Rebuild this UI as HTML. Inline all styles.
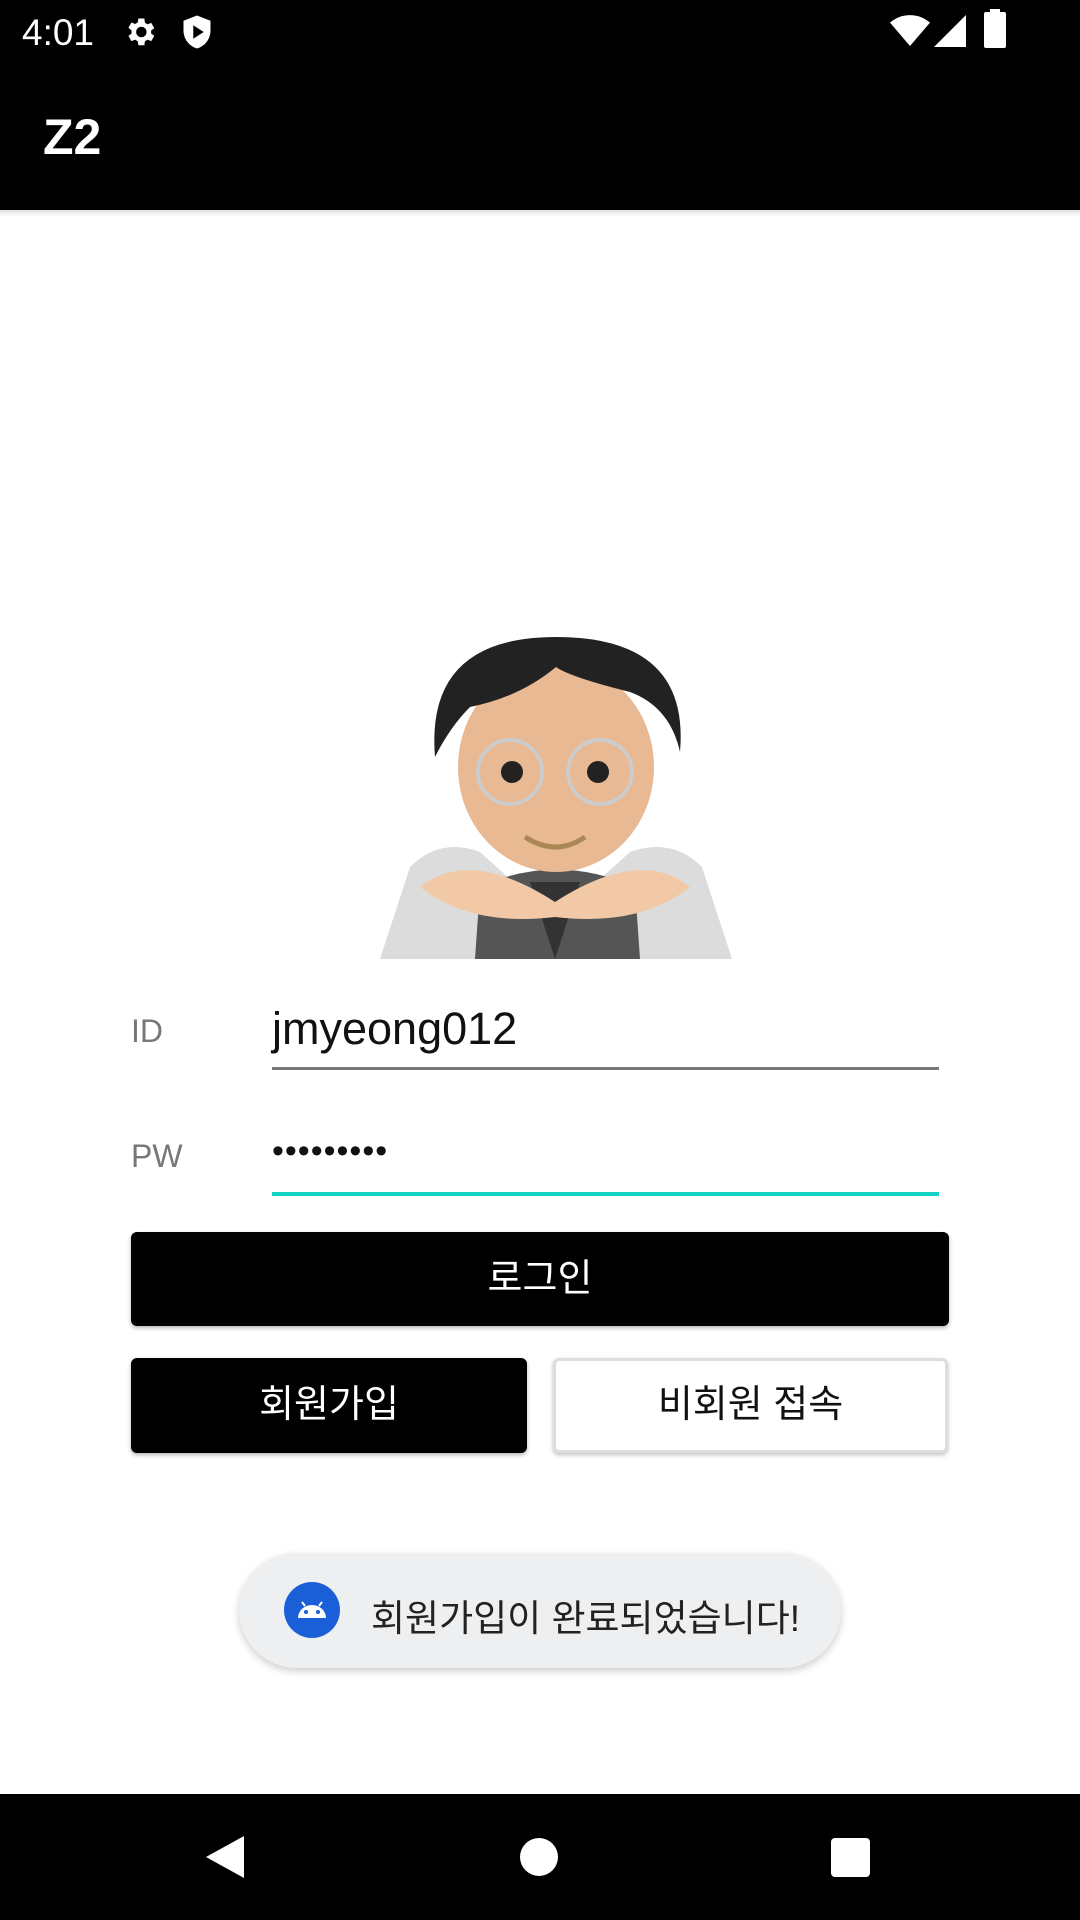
<!DOCTYPE html>
<html><head><meta charset="utf-8"><style>
*{margin:0;padding:0;box-sizing:border-box}
body{width:1080px;height:1920px;background:#fff;position:relative;overflow:hidden;font-family:"Liberation Sans","Noto Sans CJK KR",sans-serif}
.abs{position:absolute}
</style></head><body>
<div class="abs" style="left:0;top:0;width:1080px;height:210px;background:#000"></div>
<div class="abs" style="left:0;top:210px;width:1080px;height:6px;background:linear-gradient(#ddd,#fff)"></div>
<div class="abs" style="left:22px;top:12px;color:#fff;font-size:37px">4:01</div>
<svg class="abs" style="left:122px;top:14px" width="36" height="36" viewBox="0 0 24 24"><path fill="#fff" d="M19.4 13a7.5 7.5 0 0 0 0-2l2.1-1.6-2-3.5-2.5 1a7 7 0 0 0-1.700-1L14.9 3h-4l-.4 2.7a7 7 0 0 0-1.7 1l-2.5-1-2 3.5L6.4 11a7.5 7.5 0 0 0 0 2l-2.1 1.6 2 3.5 2.5-1a7 7 0 0 0 1.7 1l.4 2.7h4l.4-2.7a7 7 0 0 0 1.7-1l2.5 1 2-3.5zM12.9 15.5a3.5 3.5 0 1 1 0-7 3.5 3.5 0 0 1 0 7z"/></svg>
<svg class="abs" style="left:181px;top:14px" width="32" height="36" viewBox="0 0 20 24"><path fill="#fff" d="M10 1L1 4.5v6.5c0 6 4 10.5 9 12 5-1.5 9-6 9-12V4.5z"/><path fill="#000" d="M7.5 7.5v9l7-4.5z"/></svg>
<svg class="abs" style="left:890px;top:14px" width="40" height="34" viewBox="0 0 24 20"><path fill="#fff" d="M12 19L0 5c7-6 17-6 24 0z"/></svg>
<svg class="abs" style="left:934px;top:14px" width="32" height="34" viewBox="0 0 20 20"><path fill="#fff" d="M20 0v20H0z"/></svg>
<div class="abs" style="left:984px;top:12px;width:22px;height:36px;background:#fff;border-radius:2px"></div>
<div class="abs" style="left:990px;top:9px;width:10px;height:5px;background:#fff"></div>
<div class="abs" style="left:43px;top:108px;color:#fff;font-size:50px;font-weight:bold">Z2</div>

<svg class="abs" style="left:380px;top:637px" width="352" height="322" viewBox="0 0 352 322">
<path d="M0 322 L30 230 Q60 200 100 215 L150 260 L200 260 L250 215 Q292 200 322 230 L352 322Z" fill="#dcdcdc"/>
<path d="M95 322 L100 250 Q175 215 255 250 L260 322Z" fill="#555"/>
<path d="M150 245 L175 322 L200 245Z" fill="#333"/>
<ellipse cx="176" cy="130" rx="98" ry="105" fill="#e8b993"/>
<path d="M55 120 Q45 0 176 0 Q310 0 300 115 Q290 70 250 55 Q190 40 176 30 Q140 60 90 70 Q70 90 55 120Z" fill="#222"/>
<circle cx="130" cy="135" r="32" fill="none" stroke="#ccc" stroke-width="4"/>
<circle cx="220" cy="135" r="32" fill="none" stroke="#ccc" stroke-width="4"/>
<circle cx="132" cy="135" r="11" fill="#222"/><circle cx="218" cy="135" r="11" fill="#222"/>
<path d="M145 200 Q176 220 205 200" stroke="#a85" stroke-width="5" fill="none"/>
<path d="M40 250 Q90 210 175 265 Q260 210 310 250 Q260 290 175 280 Q90 290 40 250Z" fill="#f2c9a6"/>
</svg>

<div class="abs" style="left:131px;top:1013px;color:#777;font-size:32px">ID</div>
<div class="abs" style="left:272px;top:1003px;color:#111;font-size:45px">jmyeong012</div>
<div class="abs" style="left:272px;top:1067px;width:667px;height:3px;background:#777"></div>
<div class="abs" style="left:131px;top:1138px;color:#777;font-size:32px">PW</div>
<div class="abs" style="left:272px;top:1132px;color:#111;font-size:34px;letter-spacing:1px">•••••••••</div>
<div class="abs" style="left:272px;top:1192px;width:667px;height:4px;background:#13d1c3"></div>

<div class="abs" style="left:131px;top:1232px;width:818px;height:94px;background:#000;border-radius:6px;color:#fff;font-size:38px;text-align:center;line-height:94px;box-shadow:0 2px 4px rgba(0,0,0,.3)">로그인</div>
<div class="abs" style="left:131px;top:1358px;width:396px;height:95px;background:#000;border-radius:6px;color:#fff;font-size:38px;text-align:center;line-height:95px;box-shadow:0 2px 4px rgba(0,0,0,.3)">회원가입</div>
<div class="abs" style="left:553px;top:1358px;width:395px;height:95px;background:#fff;border:3px solid #ddd;border-radius:6px;color:#111;font-size:38px;text-align:center;line-height:89px;box-shadow:0 2px 4px rgba(0,0,0,.25)">비회원 접속</div>

<div class="abs" style="left:239px;top:1553px;width:602px;height:115px;background:#eeeff1;border-radius:58px;box-shadow:0 3px 8px rgba(0,0,0,.2)"></div>
<svg class="abs" style="left:284px;top:1582px" width="56" height="56" viewBox="0 0 56 56"><circle cx="28" cy="28" r="28" fill="#1a5fd8"/><path d="M14 36a14 13 0 0 1 28 0z" fill="#fff"/><circle cx="22" cy="30" r="2" fill="#1a5fd8"/><circle cx="34" cy="30" r="2" fill="#1a5fd8"/><path d="M18 20l3 4M38 20l-3 4" stroke="#fff" stroke-width="2"/></svg>
<div class="abs" style="left:371px;top:1588px;color:#222;font-size:37px">회원가입이 완료되었습니다!</div>

<div class="abs" style="left:0;top:1794px;width:1080px;height:126px;background:#000"></div>
<svg class="abs" style="left:204px;top:1834px" width="42" height="46" viewBox="0 0 42 46"><path d="M40 2V44L2 23Z" fill="#fff"/></svg>
<div class="abs" style="left:520px;top:1838px;width:38px;height:38px;border-radius:50%;background:#fff"></div>
<div class="abs" style="left:831px;top:1838px;width:39px;height:39px;border-radius:4px;background:#fff"></div>
</body></html>
